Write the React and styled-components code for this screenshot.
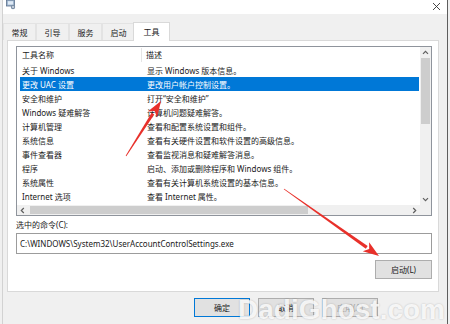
import React from "react";
import styled, { createGlobalStyle } from "styled-components";

const GlobalStyle = createGlobalStyle`
  html, body {
    margin: 0;
    padding: 0;
    background: #f0f0f0;
  }
  body {
    font-family: "Noto Sans", "Noto Sans CJK SC", sans-serif;
    font-size: 8px;
    color: #1a1a1a;
  }
`;

const Window = styled.div`
  position: relative;
  box-sizing: border-box;
  width: 446px;
  height: 324px;
  margin-left: 2px;
  border-left: 1px solid #d2d2d2;
  border-right: 1px solid #5e5e5e;
  background: #f0f0f0;
  display: flex;
  flex-direction: column;
  overflow: hidden;
`;

const TitleBar = styled.div`
  height: 14px;
  flex: 0 0 14px;
  background: #fff;
  display: flex;
  justify-content: space-between;
  align-items: flex-start;
  padding: 0 6px 0 3px;
`;

const TabStrip = styled.div`
  height: 26px;
  flex: 0 0 26px;
  display: flex;
  align-items: flex-end;
`;

const Tab = styled.div`
  box-sizing: border-box;
  height: ${(p) => (p.$active ? 19 : 17)}px;
  width: ${(p) => (p.$active ? 37 : 33)}px;
  margin: ${(p) => (p.$active ? "0 -2px -1px -2px" : "0")};
  display: flex;
  align-items: center;
  justify-content: center;
  padding-bottom: ${(p) => (p.$active ? 1 : 0)}px;
  background: ${(p) => (p.$active ? "#fff" : "#f0f0f0")};
  border: 1px solid ${(p) => (p.$active ? "#d9d9d9" : "#e3e3e3")};
  border-bottom: none;
  position: relative;
  z-index: ${(p) => (p.$active ? 2 : 1)};
`;

const Panel = styled.div`
  box-sizing: border-box;
  height: 252px;
  flex: 0 0 252px;
  margin: 0 8px 0 4px;
  background: #fff;
  border: 1px solid #d9d9d9;
  padding: 5px 6px 0 8px;
  display: flex;
  flex-direction: column;
`;

const ListBox = styled.div`
  height: 170px;
  box-sizing: border-box;
  border: 1px solid #8f949c;
  display: grid;
  grid-template-columns: 1fr 11px;
  grid-template-rows: 158px 10px;
`;

const ListArea = styled.div`
  padding-left: 3px;
  overflow: hidden;
`;

const Columns = styled.div`
  display: grid;
  grid-template-columns: 122px 1fr;
  align-items: center;
  white-space: nowrap;
  margin-right: 1px;
`;

const HeaderRow = styled(Columns)`
  height: 16px;
`;

const HeaderCell = styled.div`
  padding-left: ${(p) => (p.$first ? 2 : 4)}px;
  border-right: ${(p) => (p.$first ? "1px solid #e5e5e5" : "none")};
  line-height: 14px;
`;

const Row = styled(Columns)`
  height: 14px;
  background: ${(p) => (p.$selected ? "#0078d7" : "transparent")};
  color: ${(p) => (p.$selected ? "#fff" : "#1a1a1a")};
`;

const Cell = styled.div`
  padding-left: ${(p) => (p.$first ? 2 : 5)}px;
  overflow: hidden;
`;

const VScroll = styled.div`
  background: #f0f0f0;
  display: flex;
  flex-direction: column;
  align-items: center;
`;

const HScroll = styled.div`
  background: #f0f0f0;
  display: flex;
  align-items: center;
`;

const Corner = styled.div`
  background: #f0f0f0;
`;

const ArrowBox = styled.div`
  width: 11px;
  height: 11px;
  flex: 0 0 11px;
  display: flex;
  align-items: center;
  justify-content: center;
`;

const VThumb = styled.div`
  width: 9px;
  height: 66px;
  background: #cdcdcd;
`;

const Track = styled.div`
  flex: 1;
`;

const HThumb = styled.div`
  width: 278px;
  height: 8px;
  margin-left: 2px;
  background: #cdcdcd;
`;

const FieldLabel = styled.div`
  margin-top: 3px;
  line-height: 12px;
`;

const CommandBox = styled.div`
  box-sizing: border-box;
  margin-top: 2px;
  height: 21px;
  border: 1px solid #9c9c9c;
  padding-left: 3px;
  display: flex;
  align-items: center;
  white-space: nowrap;
`;

const ButtonRow = styled.div`
  display: flex;
  justify-content: flex-end;
  margin-top: 6px;
`;

const Button = styled.div`
  box-sizing: border-box;
  width: ${(p) => p.$w || 56}px;
  height: 19px;
  display: flex;
  align-items: center;
  justify-content: center;
  background: #e1e1e1;
  border: 1px solid ${(p) => (p.$default ? "#0078d7" : "#adadad")};
  color: ${(p) => (p.$disabled ? "#a0a0a0" : "#1a1a1a")};
`;

const Footer = styled.div`
  flex: 1;
  display: flex;
  align-items: flex-start;
  gap: 8px;
  padding: 6px 0 0 191px;
`;

const Annotations = styled.svg`
  position: absolute;
  left: -3px;
  top: 0;
  width: 450px;
  height: 324px;
  pointer-events: none;
  z-index: 5;
`;

const Watermark = styled.div`
  position: absolute;
  right: 2px;
  bottom: 1px;
  font-family: "Liberation Sans", sans-serif;
  font-weight: bold;
  font-size: 28px;
  line-height: 27px;
  color: rgba(255, 255, 255, 0.85);
  text-shadow: 0 0 2px rgba(0, 0, 0, 0.22);
  pointer-events: none;
  z-index: 4;
`;

const tabs = ["常规", "引导", "服务", "启动", "工具"];

const rows = [
  ["关于 Windows", "显示 Windows 版本信息。"],
  ["更改 UAC 设置", "更改用户帐户控制设置。"],
  ["安全和维护", "打开“安全和维护”"],
  ["Windows 疑难解答", "计算机问题疑难解答。"],
  ["计算机管理", "查看和配置系统设置和组件。"],
  ["系统信息", "查看有关硬件设置和软件设置的高级信息。"],
  ["事件查看器", "查看监视消息和疑难解答消息。"],
  ["程序", "启动、添加或删除程序和 Windows 组件。"],
  ["系统属性", "查看有关计算机系统设置的基本信息。"],
  ["Internet 选项", "查看 Internet 属性。"],
];

function Chevron({ dir }) {
  const rot = { up: 0, right: 90, down: 180, left: 270 }[dir];
  return (
    <svg width="7" height="7" viewBox="0 0 7 7" style={{ transform: `rotate(${rot}deg)` }}>
      <polyline points="1,4.8 3.5,2.3 6,4.8" fill="none" stroke="#606060" strokeWidth="1.2" />
    </svg>
  );
}

function AppIcon() {
  return (
    <svg width="10" height="10" viewBox="0 0 10 10">
      <rect x="0.5" y="0" width="8" height="6" fill="#9fb6cf" stroke="#5a6f8a" strokeWidth="0.8" />
      <rect x="2" y="1.2" width="5" height="3.4" fill="#dfeaf6" />
      <circle cx="7" cy="7" r="2.2" fill="#7c8fa6" />
      <circle cx="7" cy="7" r="0.9" fill="#dfe6ee" />
    </svg>
  );
}

function CloseIcon() {
  return (
    <svg width="9" height="9" viewBox="0 0 9 9" style={{ marginTop: 2 }}>
      <path d="M1 1 L8 8 M8 1 L1 8" stroke="#333" strokeWidth="0.9" />
    </svg>
  );
}

function Arrow({ x1, y1, x2, y2 }) {
  const dx = x2 - x1;
  const dy = y2 - y1;
  const len = Math.hypot(dx, dy);
  const ux = dx / len;
  const uy = dy / len;
  const nx = -uy;
  const ny = ux;
  const head = 15;
  const bx = x2 - ux * head;
  const by = y2 - uy * head;
  const shaft = [
    [x1 + nx * 0.4, y1 + ny * 0.4],
    [bx + nx * 1.6, by + ny * 1.6],
    [bx - nx * 1.6, by - ny * 1.6],
    [x1 - nx * 0.4, y1 - ny * 0.4],
  ];
  const tip = [
    [x2, y2],
    [bx + nx * 5.5 - ux * 1, by + ny * 5.5 - uy * 1],
    [bx + ux * 3, by + uy * 3],
    [bx - nx * 5.5 - ux * 1, by - ny * 5.5 - uy * 1],
  ];
  const pts = (a) => a.map((p) => p.join(",")).join(" ");
  return (
    <g fill="#e8302a">
      <polygon points={pts(shaft)} />
      <polygon points={pts(tip)} />
    </g>
  );
}

export default function App() {
  return (
    <>
      <GlobalStyle />
      <Window>
        <TitleBar>
          <AppIcon />
          <CloseIcon />
        </TitleBar>
        <TabStrip>
          {tabs.map((t, i) => (
            <Tab key={t} $active={i === tabs.length - 1}>
              {t}
            </Tab>
          ))}
        </TabStrip>
        <Panel>
          <ListBox>
            <ListArea>
              <HeaderRow>
                <HeaderCell $first>工具名称</HeaderCell>
                <HeaderCell>描述</HeaderCell>
              </HeaderRow>
              {rows.map(([name, desc], i) => (
                <Row key={name} $selected={i === 1}>
                  <Cell $first>{name}</Cell>
                  <Cell>{desc}</Cell>
                </Row>
              ))}
            </ListArea>
            <VScroll>
              <ArrowBox>
                <Chevron dir="up" />
              </ArrowBox>
              <VThumb />
              <Track />
              <ArrowBox>
                <Chevron dir="down" />
              </ArrowBox>
            </VScroll>
            <HScroll>
              <ArrowBox>
                <Chevron dir="left" />
              </ArrowBox>
              <HThumb />
              <Track />
              <ArrowBox>
                <Chevron dir="right" />
              </ArrowBox>
            </HScroll>
            <Corner />
          </ListBox>
          <FieldLabel>选中的命令(C):</FieldLabel>
          <CommandBox>C:\WINDOWS\System32\UserAccountControlSettings.exe</CommandBox>
          <ButtonRow>
            <Button $w={57}>启动(L)</Button>
          </ButtonRow>
        </Panel>
        <Footer>
          <Button $default>确定</Button>
          <Button>取消</Button>
          <Button $disabled>应用(A)</Button>
        </Footer>
        <Watermark>DadiGhost.com</Watermark>
        <Annotations viewBox="0 0 450 324">
          <Arrow x1={126} y1={156} x2={161} y2={101} />
          <Arrow x1={284} y1={189} x2={379} y2={256} />
        </Annotations>
      </Window>
    </>
  );
}
